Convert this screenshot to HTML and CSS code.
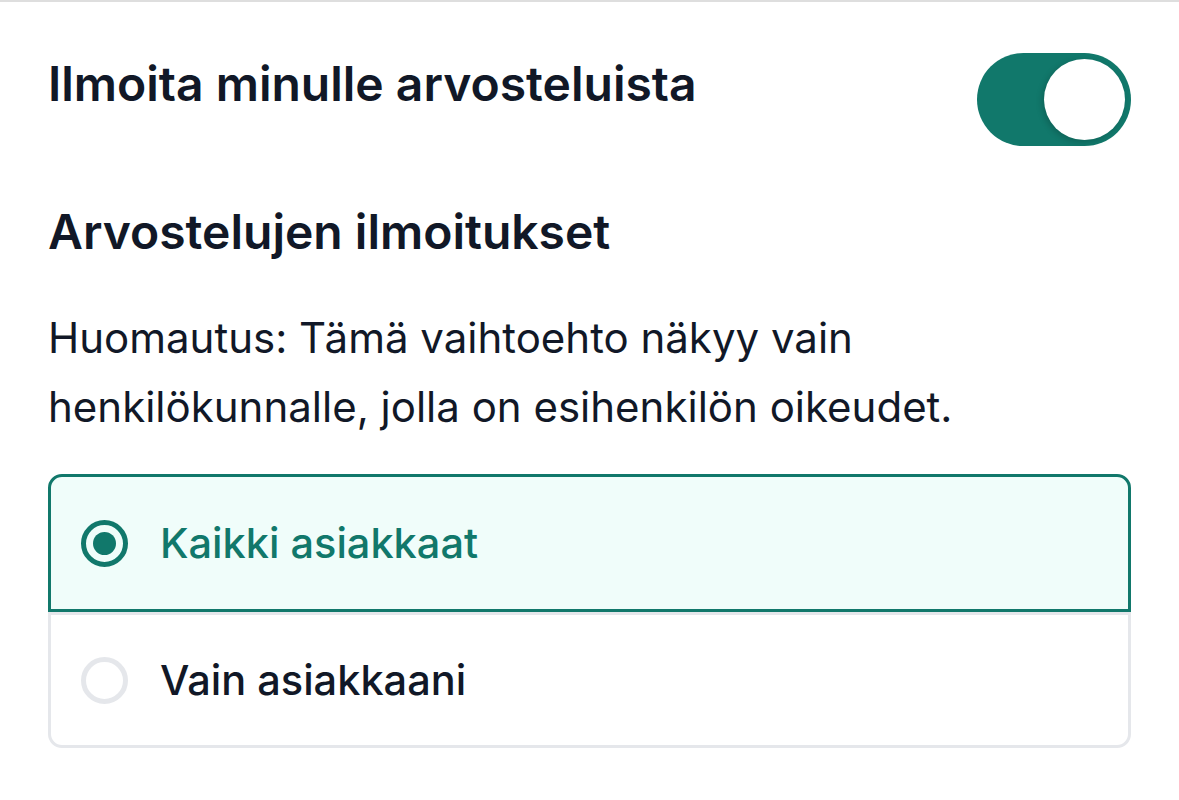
FILE: index.html
```html
<!DOCTYPE html>
<html lang="fi">
<head>
<meta charset="utf-8">
<title>Arvostelut</title>
<link rel="stylesheet" href="styles.css">
</head>
<body>
<div class="page">
  <div class="setting-row">
    <h1 class="title">Ilmoita minulle arvosteluista</h1>
    <div class="toggle" role="switch" aria-checked="true"><span class="knob"></span></div>
  </div>
  <h2 class="subtitle">Arvostelujen ilmoitukset</h2>
  <p class="note">Huomautus: Tämä vaihtoehto näkyy vain henkilökunnalle, jolla on esihenkilön oikeudet.</p>
  <div class="options" role="radiogroup">
    <div class="option selected" role="radio" aria-checked="true">
      <span class="radio"></span>
      <span class="label">Kaikki asiakkaat</span>
    </div>
    <div class="option" role="radio" aria-checked="false">
      <span class="radio"></span>
      <span class="label">Vain asiakkaani</span>
    </div>
  </div>
</div>
</body>
</html>
```
FILE: styles.css
```css
html, body {
  margin: 0;
  padding: 0;
  background: #ffffff;
}
body {
  font-family: "Inter", "Noto Sans", sans-serif;
  color: #111827;
}
.page {
  border-top: 2px solid #dedede;
  padding: 0 48px;
}
.setting-row {
  display: flex;
  justify-content: space-between;
  align-items: flex-start;
  padding-top: 51px;
}
.title {
  margin: 2px 0 0;
  font-size: 48px;
  line-height: 58px;
  font-weight: 600;
}
.toggle {
  width: 154px;
  height: 93px;
  border-radius: 47px;
  background: #11786b;
  display: flex;
  align-items: center;
  justify-content: flex-end;
  padding: 0 6px;
  box-sizing: border-box;
}
.knob {
  width: 81px;
  height: 81px;
  border-radius: 50%;
  background: #ffffff;
  box-shadow: -2px 2px 6px rgba(0, 0, 0, 0.18);
}
.subtitle {
  margin: 57px 0 0;
  font-size: 48px;
  line-height: 58px;
  font-weight: 600;
}
.note {
  margin: 42px 0 0;
  font-size: 42px;
  line-height: 69px;
  font-weight: 400;
  max-width: 940px;
}
.options {
  margin-top: 33px;
  display: flex;
  flex-direction: column;
}
.option {
  display: flex;
  align-items: center;
  gap: 32px;
  height: 136px;
  box-sizing: border-box;
  padding: 0 30px;
  border: 3px solid #e5e7eb;
  border-radius: 0 0 14px 14px;
  font-size: 41.5px;
  font-weight: 500;
}
.option.selected {
  height: 138px;
  border-color: #11786b;
  border-radius: 14px 14px 0 0;
  background: #f0fdfa;
  color: #11786b;
}
.radio {
  width: 47px;
  height: 47px;
  box-sizing: border-box;
  border-radius: 50%;
  border: 5px solid #e5e7eb;
  flex: none;
}
.selected .radio {
  border-color: #11786b;
  padding: 7px;
  background: #11786b;
  background-clip: content-box;
}
```
